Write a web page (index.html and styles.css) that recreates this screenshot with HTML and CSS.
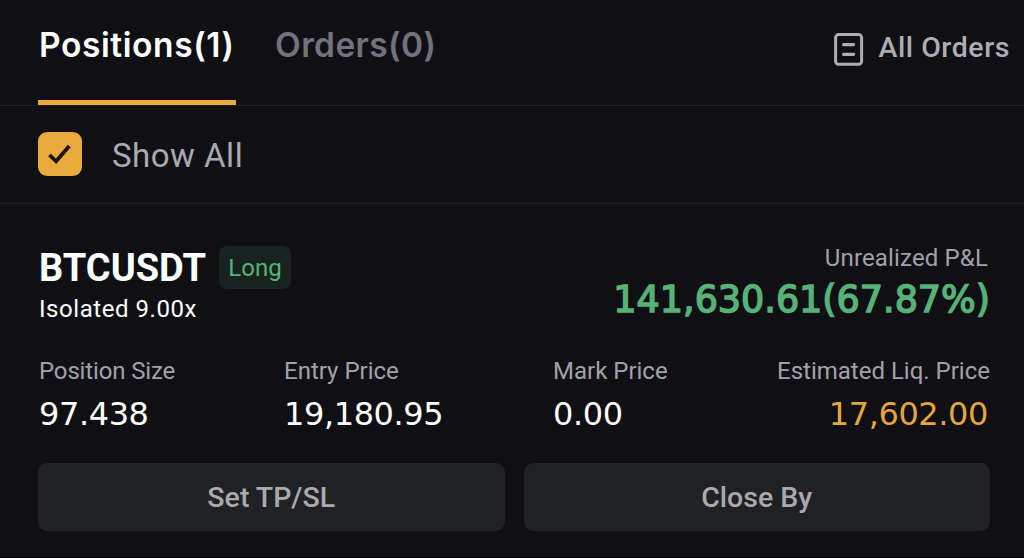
FILE: index.html
```html
<!DOCTYPE html>
<html lang="en">
<head>
  <meta charset="UTF-8">
  <meta name="viewport" content="width=device-width, initial-scale=1.0">
  <title>Positions</title>
  <link rel="stylesheet" href="styles.css">
</head>
<body>

  <!-- Tabs -->
  <div class="tabs">
    <div class="tab active">Positions(1)</div>
    <div class="tab">Orders(0)</div>
    <div class="all-orders">
      <svg class="list-icon" width="30" height="34" viewBox="0 0 30 34" fill="none" stroke="#adaeb4">
        <rect x="1.6" y="1.6" width="26" height="29.6" rx="3" stroke-width="3"/>
        <path d="M9.6 11.6h10M9.6 21.3h10" stroke-width="3.2" stroke-linecap="round"/>
      </svg>
      <span>All Orders</span>
    </div>
  </div>

  <!-- Filter -->
  <div class="filter">
    <div class="checkbox">
      <svg width="44" height="44" viewBox="0 0 44 44" fill="none" stroke="#1b130c">
        <path d="M11.5 23l6.6 6.3L31.3 14" stroke-width="3.8"/>
      </svg>
    </div>
    <span class="show-all">Show All</span>
  </div>

  <!-- Position -->
  <div class="position">
    <div class="summary">
      <div>
        <div class="pair">
          <span class="symbol">BTCUSDT</span>
          <span class="side">Long</span>
        </div>
        <div class="leverage">Isolated 9.00x</div>
      </div>
      <div class="pnl">
        <div class="label">Unrealized P&amp;L</div>
        <div class="pnl-value">141,630.61(67.87%)</div>
      </div>
    </div>

    <div class="stats">
      <div>
        <div class="label size">Position Size</div>
        <div class="value">97.438</div>
      </div>
      <div>
        <div class="label">Entry Price</div>
        <div class="value">19,180.95</div>
      </div>
      <div>
        <div class="label">Mark Price</div>
        <div class="value">0.00</div>
      </div>
      <div class="liq">
        <div class="label">Estimated Liq. Price</div>
        <div class="value">17,602.00</div>
      </div>
    </div>

    <div class="actions">
      <button class="btn">Set TP/SL</button>
      <button class="btn">Close By</button>
    </div>
  </div>

</body>
</html>
```

FILE: styles.css
```css
* {
  box-sizing: border-box;
}
body {
  margin: 0;
  height: 558px;
  overflow: hidden;
  background-color: #101014;
  border-bottom: 1px solid #020203;
  font-family: Roboto, "Liberation Sans", sans-serif;
  color: #fff;
  white-space: nowrap;
}
svg {
  display: block;
}

/* Tabs */
.tabs {
  display: flex;
  height: 106px;
  padding: 0 14px 0 38px;
  border-bottom: 1px solid #202024;
}
.tab {
  height: 105px;
  margin-right: 39px;
  padding-top: 25px;
  border-bottom: 5px solid transparent;
  font-family: Inter, sans-serif;
  font-size: 33.5px;
  line-height: 40px;
  font-weight: 600;
  letter-spacing: 0.4px;
  color: #71727a;
}
.tab.active {
  width: 198px;
  padding-left: 1px;
  border-color: #eaa93b;
  letter-spacing: 0.6px;
  color: #fff;
}
.all-orders {
  display: flex;
  margin-left: auto;
  padding-top: 33px;
  gap: 14px;
  font-size: 28.5px;
  line-height: 30px;
  font-weight: 500;
  letter-spacing: 0.55px;
  color: #adaeb4;
}

/* Filter */
.filter {
  display: flex;
  align-items: center;
  height: 98px;
  padding: 0 38px 1px;
  gap: 30px;
  border-bottom: 2px solid #1a1a1f;
}
.checkbox {
  width: 44px;
  height: 44px;
  border-radius: 9px;
  background-color: #eaa93b;
}
.show-all {
  padding-top: 4px;
  font-size: 33px;
  letter-spacing: 0.5px;
  color: #a9aab0;
}

/* Position */
.position {
  padding: 42px 34px 0 38px;
}
.summary {
  display: flex;
  justify-content: space-between;
  height: 82px;
  padding-left: 1px;
}
.pair {
  display: flex;
  height: 44px;
  gap: 13px;
}
.symbol {
  width: 167px;
  font-size: 38px;
  line-height: 44px;
  font-weight: 700;
}
.side {
  width: 72px;
  height: 43px;
  border-radius: 8px;
  background-color: #17231f;
  font-size: 24px;
  line-height: 44px;
  text-align: center;
  color: #56b277;
}
.leverage {
  font-size: 24px;
  line-height: 38px;
  letter-spacing: 0.55px;
}
.label {
  font-size: 24px;
  line-height: 28px;
  color: #a1a2a8;
}
.label.size {
  letter-spacing: -0.15px;
}
.pnl {
  margin-top: -2px;
  text-align: right;
}
.pnl .label {
  padding-right: 2px;
  letter-spacing: 0.15px;
}
.pnl-value {
  font-family: "DejaVu Sans", sans-serif;
  font-size: 36.5px;
  line-height: 56px;
  -webkit-text-stroke: 1.5px #56b277;
  color: #56b277;
}
.stats {
  display: grid;
  grid-template-columns: 245px 269px 1fr auto;
  margin-top: 29px;
  padding-left: 1px;
}
.value {
  font-family: "DejaVu Sans", sans-serif;
  font-size: 32px;
  line-height: 58px;
  letter-spacing: -0.4px;
}
.liq {
  text-align: right;
}
.liq .value {
  padding-right: 2px;
  color: #e5a63e;
}

/* Buttons */
.actions {
  display: grid;
  grid-template-columns: 1fr 1fr;
  gap: 19px;
  margin-top: 20px;
}
.btn {
  height: 68px;
  padding: 0;
  border: 0;
  border-radius: 9px;
  background-color: #202125;
  font-family: inherit;
  font-size: 28.5px;
  font-weight: 500;
  color: #a9aab0;
}
```
